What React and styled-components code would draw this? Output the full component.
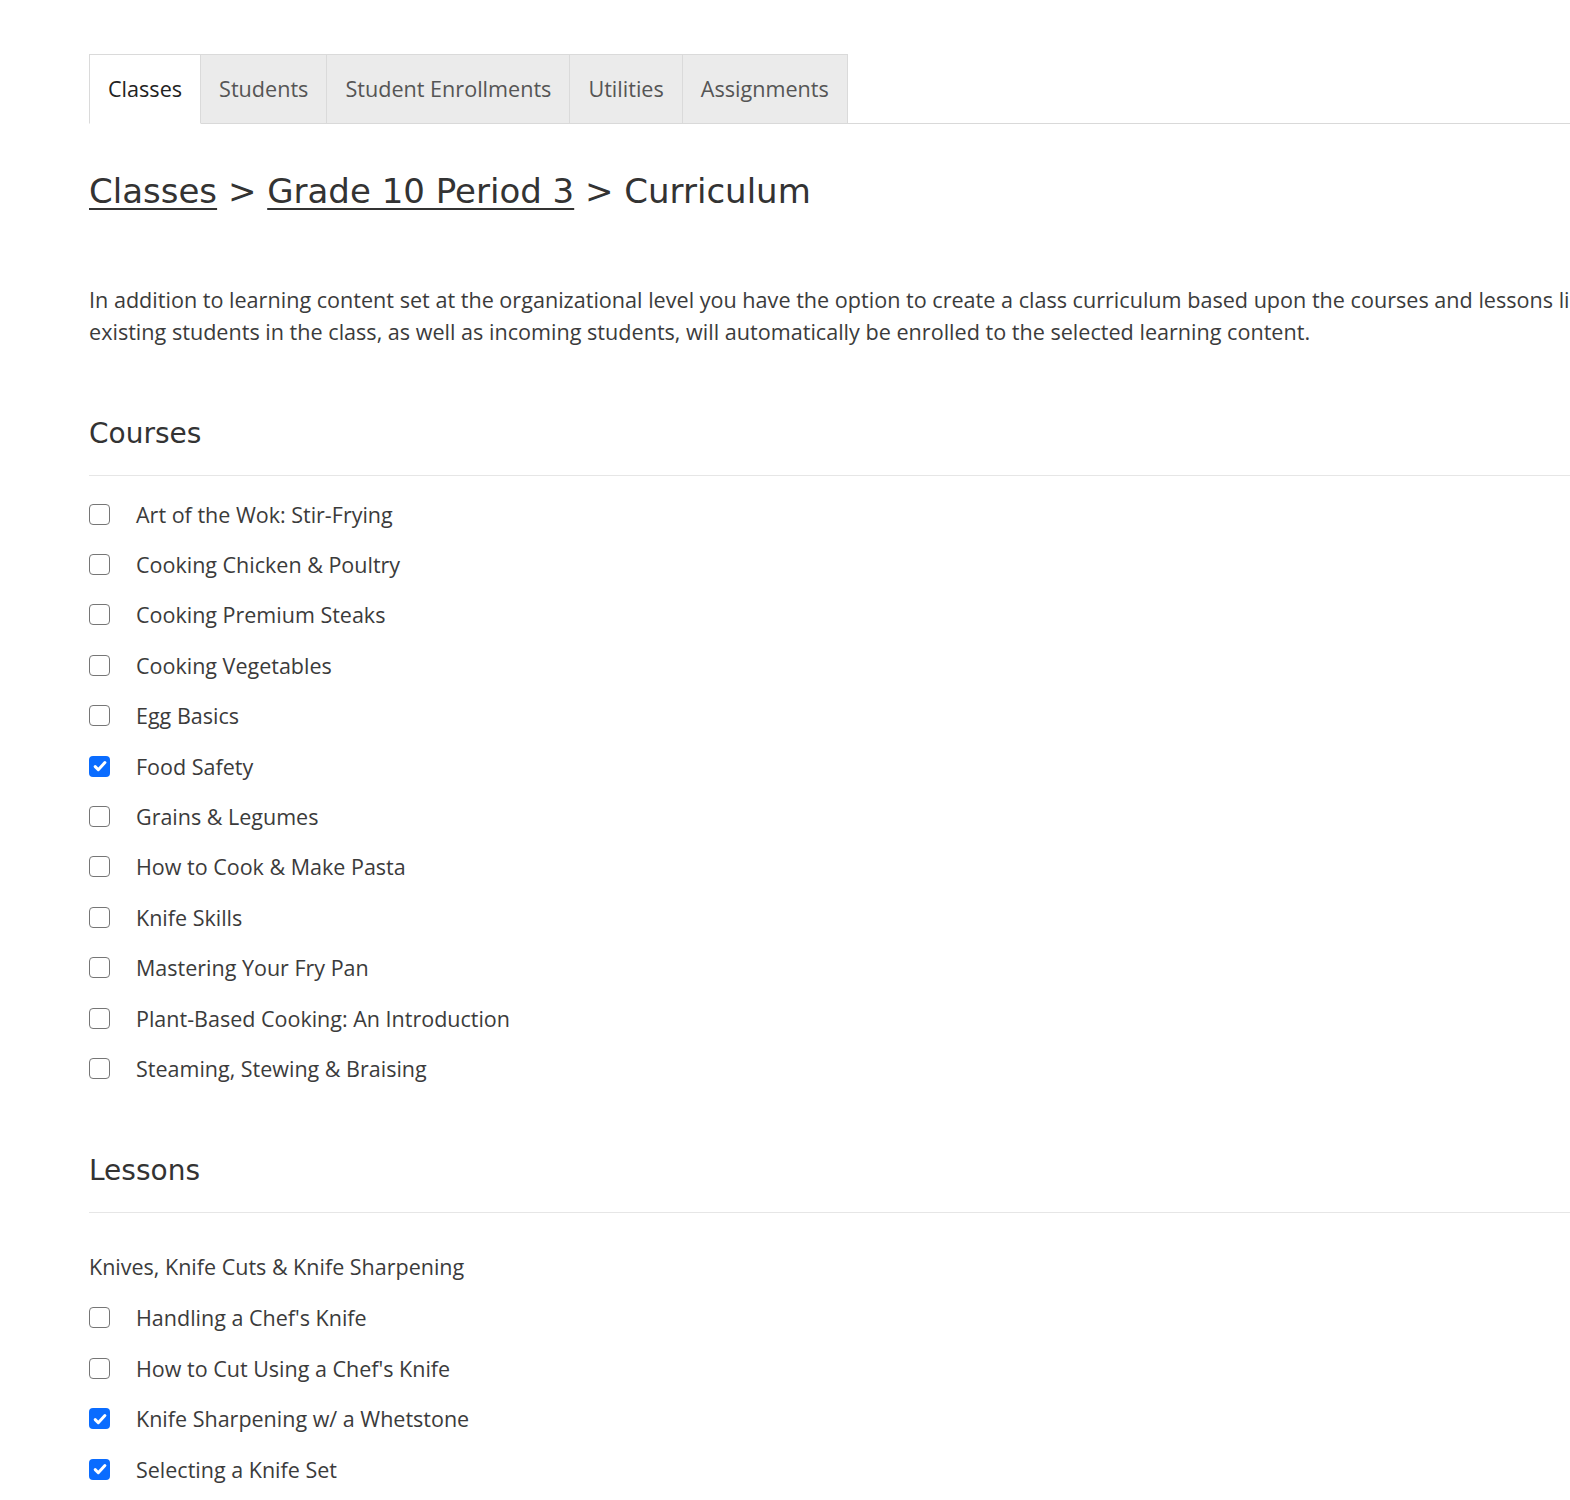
import React, { useState } from "react";
import styled, { createGlobalStyle } from "styled-components";

const GlobalStyle = createGlobalStyle`
    html, body {
        margin: 0;
        padding: 0;
        background: #fff;
        overflow-x: hidden;
    }
    body {
        font-family: "Open Sans", "Liberation Sans", sans-serif;
        color: #3b3b3b;
    }
`;

const Page = styled.div`
    width: 1900px;
    padding: 54px 0 40px 89px;
`;

const TabBar = styled.div`
    display: flex;
    height: 69px;
    border-bottom: 1px solid #d9d9d9;
`;

const Tab = styled.div`
    display: flex;
    align-items: center;
    padding: 0 18px 2px;
    font-size: 21.6px;
    color: ${(p) => (p.active ? "#222" : "#555")};
    background: ${(p) => (p.active ? "#fff" : "#ebebeb")};
    border: 1px solid #dadada;
    border-left: ${(p) => (p.first ? "1px solid #dadada" : "none")};
    border-bottom: ${(p) => (p.active ? "1px solid #fff" : "none")};
    margin-bottom: ${(p) => (p.active ? "-1px" : "0")};
    cursor: pointer;
`;

const Crumbs = styled.h1`
    margin: 44px 0 0;
    font-family: "DejaVu Sans", sans-serif;
    font-weight: 400;
    font-size: 34px;
    line-height: 46px;
    color: #333;
`;

const CrumbLink = styled.a`
    color: #333;
    text-decoration: underline;
    text-decoration-thickness: 2px;
    text-underline-offset: 5px;
`;

const Intro = styled.p`
    margin: 70px 0 0;
    font-size: 21.6px;
    line-height: 32px;
    color: #3b3b3b;
`;

const Line = styled.span`
    display: block;
    white-space: nowrap;
`;

const SectionTitle = styled.h2`
    margin: ${(p) => p.top} 0 0;
    font-family: "DejaVu Sans", sans-serif;
    font-weight: 400;
    font-size: 28px;
    line-height: 36px;
    color: #333;
    padding-bottom: 23px;
    border-bottom: 1px solid #e6e6e6;
`;

const List = styled.div`
    display: flex;
    flex-direction: column;
    margin-top: ${(p) => p.top};
`;

const Row = styled.label`
    display: flex;
    align-items: center;
    height: 50.4px;
    font-size: 21.5px;
    color: #3b3b3b;
    cursor: pointer;
`;

const Box = styled.span`
    box-sizing: border-box;
    width: 21px;
    height: 21px;
    margin-right: 26px;
    border-radius: 4px;
    border: ${(p) => (p.checked ? "none" : "1.5px solid #767676")};
    background: ${(p) => (p.checked ? "#0a6cff" : "#fff")};
    display: flex;
    align-items: center;
    justify-content: center;
    flex-shrink: 0;
`;

const Group = styled.div`
    margin-top: 36px;
    font-size: 21.5px;
    line-height: 36px;
    color: #3b3b3b;
`;

const Check = () => (
    <svg width="16" height="16" viewBox="0 0 16 16">
        <path d="M3.2 8.6l3.1 3.1L12.9 4.6" fill="none" stroke="#fff" strokeWidth="3"
              strokeLinecap="round" strokeLinejoin="round"/>
    </svg>
);

const tabs = ["Classes", "Students", "Student Enrollments", "Utilities", "Assignments"];

const courses = [
    "Art of the Wok: Stir-Frying",
    "Cooking Chicken & Poultry",
    "Cooking Premium Steaks",
    "Cooking Vegetables",
    "Egg Basics",
    "Food Safety",
    "Grains & Legumes",
    "How to Cook & Make Pasta",
    "Knife Skills",
    "Mastering Your Fry Pan",
    "Plant-Based Cooking: An Introduction",
    "Steaming, Stewing & Braising",
];

const lessons = [
    "Handling a Chef's Knife",
    "How to Cut Using a Chef's Knife",
    "Knife Sharpening w/ a Whetstone",
    "Selecting a Knife Set",
];

const CheckRow = ({ label, checked, onToggle }) => (
    <Row onClick={onToggle}>
        <Box checked={checked}>{checked && <Check/>}</Box>
        {label}
    </Row>
);

const App = () => {
    const [picked, setPicked] = useState({
        "Food Safety": true,
        "Knife Sharpening w/ a Whetstone": true,
        "Selecting a Knife Set": true,
    });

    const toggle = (name) => setPicked((p) => ({ ...p, [name]: !p[name] }));

    return (
        <Page>
            <GlobalStyle/>
            <TabBar>
                {tabs.map((t, i) => (
                    <Tab key={t} active={i === 0} first={i === 0}>{t}</Tab>
                ))}
            </TabBar>

            <Crumbs>
                <CrumbLink href="#">Classes</CrumbLink> &gt; <CrumbLink href="#">Grade 10 Period 3</CrumbLink> &gt; Curriculum
            </Crumbs>

            <Intro>
                <Line>In addition to learning content set at the organizational level you have the option to create a class curriculum based upon the courses and lessons listed below. All</Line>
                <Line>existing students in the class, as well as incoming students, will automatically be enrolled to the selected learning content.</Line>
            </Intro>

            <SectionTitle top="68px">Courses</SectionTitle>
            <List top="13px">
                {courses.map((c) => (
                    <CheckRow key={c} label={c} checked={!!picked[c]} onToggle={() => toggle(c)}/>
                ))}
            </List>

            <SectionTitle top="59px">Lessons</SectionTitle>
            <Group>Knives, Knife Cuts &amp; Knife Sharpening</Group>
            <List top="8px">
                {lessons.map((l) => (
                    <CheckRow key={l} label={l} checked={!!picked[l]} onToggle={() => toggle(l)}/>
                ))}
            </List>
        </Page>
    );
};

export default App;
